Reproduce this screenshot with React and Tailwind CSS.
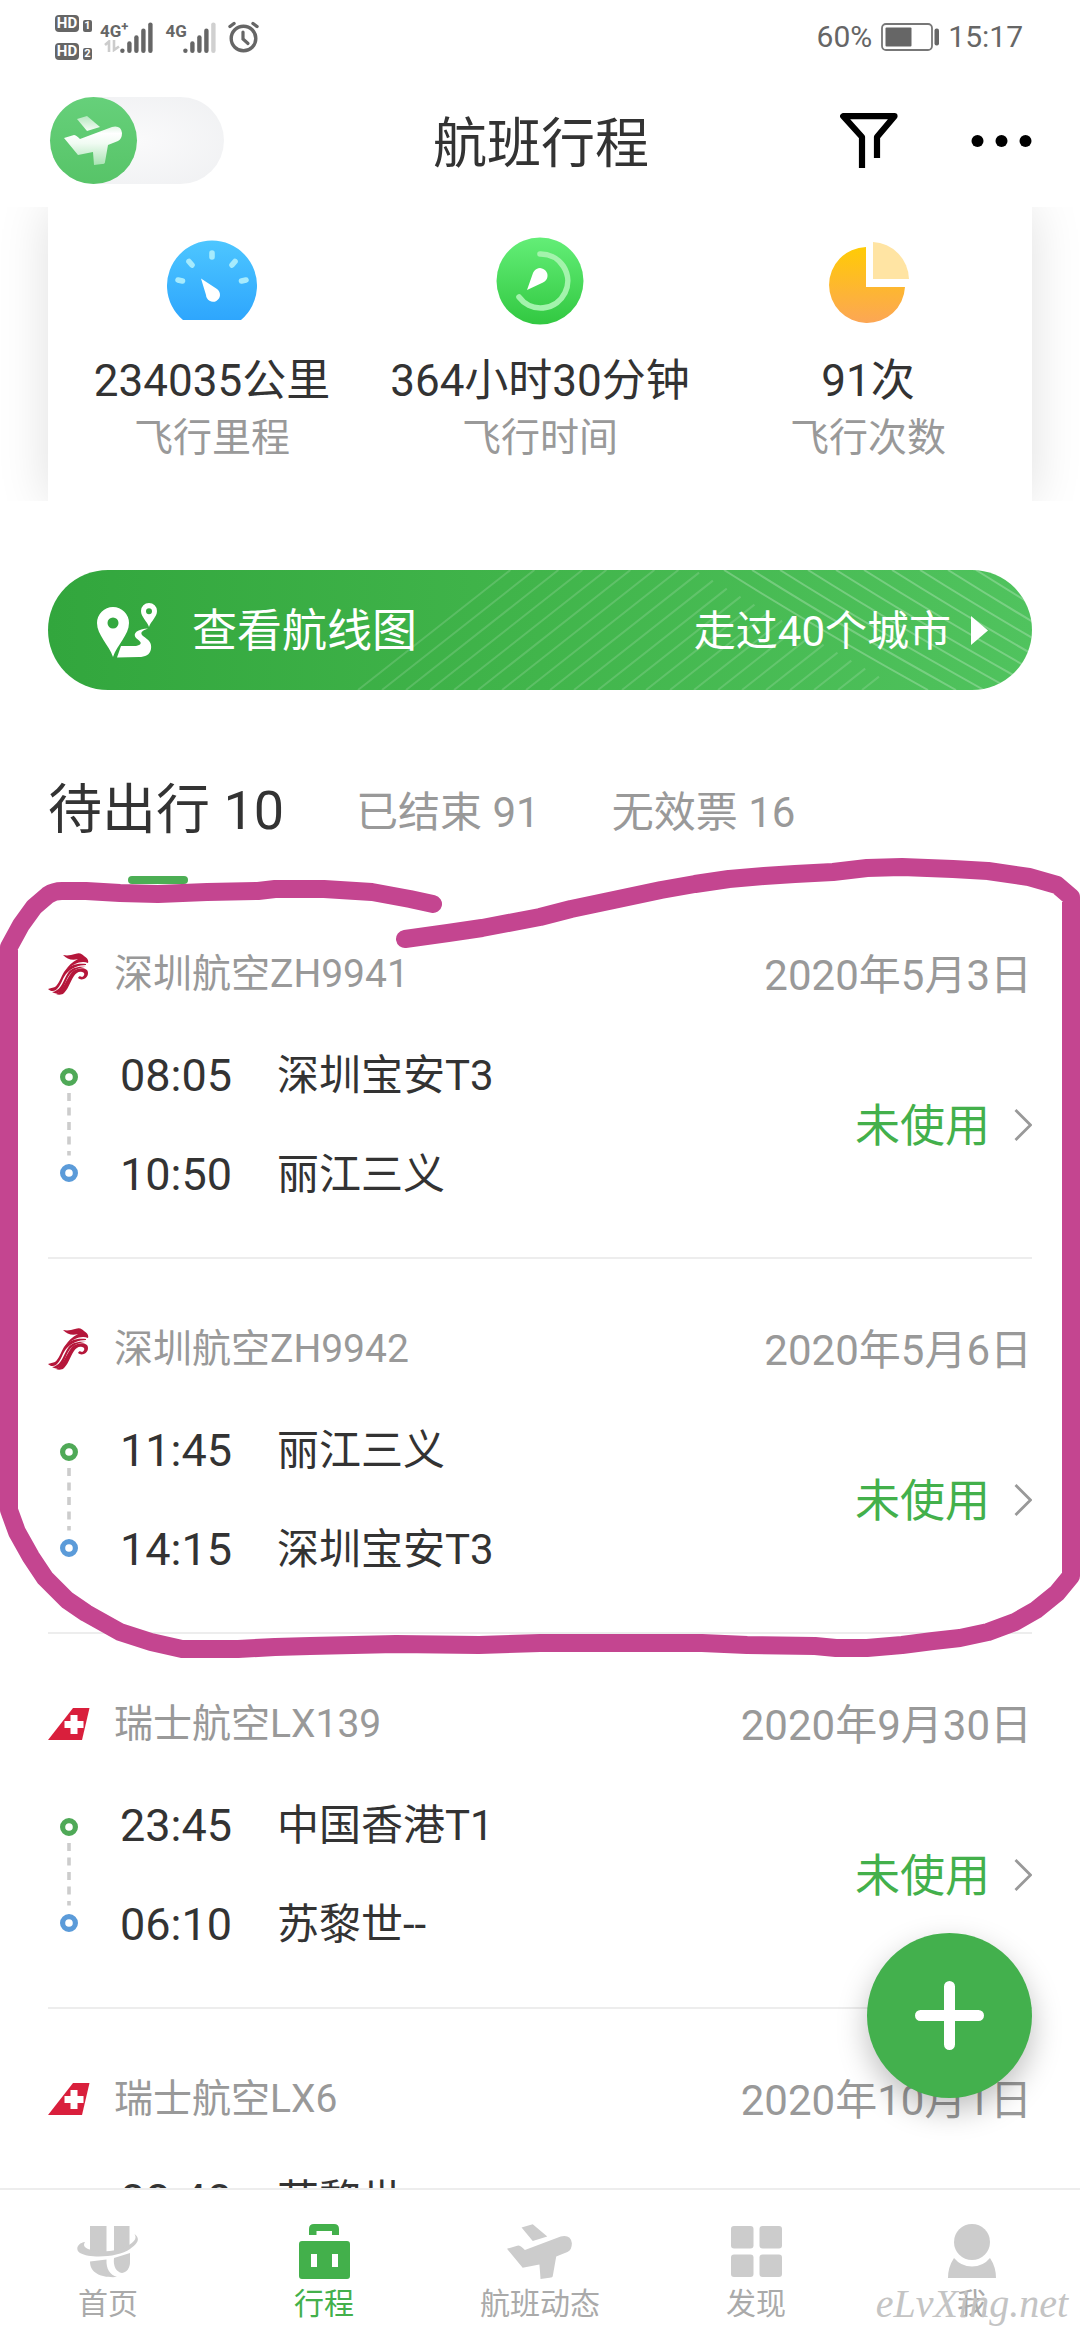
import React, { useState } from 'react';

const flights = [
  { id: 1, airline: '深圳航空', no: 'ZH9941', logo: 'shenzhen', date: '2020年5月3日', depTime: '08:05', dep: '深圳宝安T3', arrTime: '10:50', arr: '丽江三义', status: '未使用' },
  { id: 2, airline: '深圳航空', no: 'ZH9942', logo: 'shenzhen', date: '2020年5月6日', depTime: '11:45', dep: '丽江三义', arrTime: '14:15', arr: '深圳宝安T3', status: '未使用' },
  { id: 3, airline: '瑞士航空', no: 'LX139', logo: 'swiss', date: '2020年9月30日', depTime: '23:45', dep: '中国香港T1', arrTime: '06:10', arr: '苏黎世--', status: '未使用' },
  { id: 4, airline: '瑞士航空', no: 'LX6', logo: 'swiss', date: '2020年10月1日', depTime: '08:40', dep: '苏黎世', arrTime: '', arr: '', status: '' },
];

const tabs = [
  { key: 'upcoming', label: '待出行 10' },
  { key: 'finished', label: '已结束 91' },
  { key: 'invalid', label: '无效票 16' },
];

/* ---------- icons ---------- */

const PlaneShape = () => (
  <>
    <path d="M13 3 L23 0 L36 11 L23 15 Z" />
    <path d="M0 22 L10 19 Q12 19 16 23 L48 11 Q57 9 58 17 Q58 23 54 25 L44 29 L41 46 Q41 48 38 48 L30 49 L29 36 L14 39 Z" />
  </>
);

const HdBadge = ({ sim }) => (
  <span className="flex items-end gap-1">
    <span className="flex h-[17px] w-6 items-center justify-center rounded-sm bg-[#666] text-[15px] font-bold leading-none text-white">HD</span>
    <span className="flex h-3 w-[9px] items-center justify-center rounded-xs bg-[#666] text-[11px] font-bold leading-none text-white">{sim}</span>
  </span>
);

const SignalBars = ({ level }) => (
  <svg className="h-[31px] w-[33px]" viewBox="0 0 33 31" strokeWidth="4.4" strokeLinecap="round">
    {[28.6, 21.5, 15.5, 8.8, 2.6].map((y, i) => (
      <path key={y} d={`M${2.4 + i * 7} ${y} V28.7`} stroke={i < level ? '#666' : '#d0d0d0'} />
    ))}
  </svg>
);

const AlarmIcon = () => (
  <svg className="h-8 w-[31px]" viewBox="0 0 31 32" fill="none" stroke="#666" strokeLinecap="round">
    <circle cx="15.5" cy="17.5" r="12.3" strokeWidth="3.4" />
    <path d="M15 11 V18 L20 22.5" strokeWidth="3.2" />
    <path d="M2 5.5 L6 2.5 M29 5.5 L25 2.5" strokeWidth="3.4" />
  </svg>
);

const BatteryIcon = () => (
  <svg className="h-[28px] w-[58px]" viewBox="0 0 58 28">
    <rect x="1" y="1" width="50" height="26" rx="4" fill="none" stroke="#777" strokeWidth="1.8" />
    <rect x="4.5" y="4.5" width="26" height="19" rx="1" fill="#666" />
    <rect x="53.5" y="5.5" width="4.5" height="17" rx="2" fill="#666" />
  </svg>
);

const FilterIcon = () => (
  <svg className="h-[55px] w-[58px]" viewBox="0 0 58 55" fill="none" stroke="#000" strokeWidth="6.2" strokeLinejoin="round">
    <path d="M22 55 V24 L3.2 3.2 H54.5 L37 24 V45" />
  </svg>
);

const MoreIcon = () => (
  <svg className="h-3 w-[61px]" viewBox="0 0 61 12">
    <circle cx="6.5" cy="6" r="6" />
    <circle cx="30.5" cy="6" r="6" />
    <circle cx="54.5" cy="6" r="6" />
  </svg>
);

const GaugeIcon = () => (
  <svg className="h-[88px] w-[90px]" viewBox="0 -2 90 88">
    <defs>
      <linearGradient id="gauge" x1="0" y1="0" x2="0" y2="1">
        <stop offset="0" stopColor="#4dc6ff" />
        <stop offset="1" stopColor="#2ea6fd" />
      </linearGradient>
    </defs>
    <path d="M16 81 A45 45 0 1 1 74 81 Z" fill="url(#gauge)" />
    <g stroke="#a6ebfd" strokeWidth="5.6" strokeLinecap="round">
      <path d="M45 14 V18 M22 22.500 L25 26 M68 22.500 L65 26 M11 41 L15.500 42 M79 41 L74.500 42" />
    </g>
    <path d="M34 39.500 L50 50 A7 7 0 1 1 39 56 Z" fill="#fff" strokeLinejoin="round" />
  </svg>
);

const CompassIcon = () => (
  <svg className="h-[88px] w-[88px]" viewBox="0 0 88 88">
    <defs>
      <linearGradient id="compass" x1="0" y1="0" x2="0" y2="1">
        <stop offset="0" stopColor="#63ee77" />
        <stop offset="1" stopColor="#32c841" />
      </linearGradient>
    </defs>
    <circle cx="44" cy="44" r="43.5" fill="url(#compass)" />
    <path d="M44 17 A27 27 0 1 1 23 60" fill="none" stroke="#a3f3ac" strokeWidth="5.6" strokeLinecap="round" />
    <path d="M31 53 L37 36 A7.500 7.500 0 1 1 47 45.500 Z" fill="#fff" />
  </svg>
);

const PieIcon = () => (
  <svg className="h-[88px] w-[82px]" viewBox="-2 -1 82 88">
    <defs>
      <linearGradient id="pie" x1="0" y1="0" x2="0" y2="1">
        <stop offset="0" stopColor="#ffcb05" />
        <stop offset="1" stopColor="#fca655" />
      </linearGradient>
    </defs>
    <path d="M37 9 V49 H76 A38 38 0 1 1 37 9 Z" fill="url(#pie)" />
    <path d="M44 4 A38 38 0 0 1 80 41 H44 Z" fill="#ffe4a3" />
  </svg>
);

const RouteIcon = () => (
  <svg className="h-[55px] w-[61px]" viewBox="0 0 61 55" fill="#fff" fillRule="evenodd">
    <path d="M16 54 C12 42 0 32 0 20 A16 16 0 0 1 32 20 C32 32 20 42 16 54 Z M16 14.500 A5.500 5.500 0 1 0 16 25.500 A5.500 5.500 0 1 0 16 14.500 Z" />
    <path d="M52 24 C50 18 44 14 44 8 A8 8 0 0 1 60 8 C60 14 54 18 52 24 Z M52 5.200 A3 3 0 1 0 52 11.200 A3 3 0 1 0 52 5.200 Z" />
    <path d="M20 54.500 L24 43 L39 43 C44 42 45 40 42 37.500 L39 35 C35 30 41 26 51 25.500 C44 28 43 30 46 33 C52 37 55 40 54 46 C53 52 48 54 42 54 Z" />
  </svg>
);

// Fine diagonal lines on the right part of the banner
const BannerLines = () => {
  const rising = [];
  for (let b = 310; b < 830; b += 24) {
    const y = Math.max(0, (8 + 0.578 * (b - 508)) / 1.734);
    rising.push(`M${b} 120 L${b + 1.27 * (120 - y)} ${y}`);
  }
  const falling = [];
  for (let t = 676; t < 1000; t += 28) {
    falling.push(`M${t} 0 Q${t + 92} 58 ${t + 204} 120`);
  }
  return (
    <svg className="absolute inset-0 h-full w-full" viewBox="0 0 984 120" preserveAspectRatio="xMaxYMid slice" fill="none" stroke="#fff" strokeWidth="2">
      <path d={rising.join(' ')} opacity="0.15" />
      <path d={falling.join(' ')} opacity="0.24" />
    </svg>
  );
};

const AirlineLogo = ({ name }) => {
  if (name === 'swiss') {
    return (
      <svg className="h-8 w-[42px]" viewBox="0 0 42 32">
        <path d="M0 32 L25 0 H41.500 L34 32 Z" fill="#d91f3c" />
        <path d="M26 7 V26 M16.500 16.500 H35.500" stroke="#fff" strokeWidth="7" />
      </svg>
    );
  }
  return (
    <svg className="h-[42px] w-[42px]" viewBox="0 0 42 42" fill="#b5163a">
      <path d="M15 2 C20 3 23 2 27 1 C32 -1 34 1 36 3 C39 5 41 7 40 10 C36 8 31 9 27 11 C23 13 20 15 17 18 C20 13 24 9 30 6 C24 8 19 6 15 2 Z" />
      <path d="M38 11 C29 10 21 12 16 19 C13 24 11 31 7 34 C5 35 2 35 0 36 C2 38 5 39 8 37 C13 33 14 26 18 21 C23 15 31 12 38 12 Z" />
      <path d="M38 14 C30 13 23 15 20 20 C16 26 14 34 9 37 C7 38 6 39 4 39 C7 41 10 41 13 38 C17 33 18 26 22 21 C27 16 33 14 38 14 Z" />
      <path d="M24 19 C30 14 40 14 40 20 C40 26 33 28 30 25 C31 23 32 23 34 24 C37 23 37 19 34 19 C31 18 28 20 26 23 C22 29 20 37 15 41 C12 42 10 42 8 41 C15 38 18 26 24 19 Z" />
    </svg>
  );
};

const RouteDots = () => (
  <svg className="h-[114px] w-[42px]" viewBox="0 0 42 114" fill="none">
    <circle cx="21" cy="9" r="6.4" stroke="#4fa957" strokeWidth="5.2" />
    <path d="M21 25 V87.500" stroke="#ccc" strokeWidth="3.6" strokeDasharray="8 6.5" />
    <circle cx="21" cy="105" r="6.4" stroke="#5b9bd9" strokeWidth="5.2" />
  </svg>
);

const ChevronIcon = () => (
  <svg className="h-8 w-[18px]" viewBox="0 0 18 32" fill="none" stroke="#999" strokeWidth="2.8">
    <path d="M1.500 1 L16.500 16 L1.500 31" />
  </svg>
);

const HomeIcon = () => (
  <svg className="h-14 w-[62px]" viewBox="0 -3 62 56" fill="currentColor">
    <path d="M13 0 H29.500 V27 H13 Z M37 0 H52.500 V20 L37 26 Z" />
    <path d="M8 16 C0 17 -2 24 3 27 C14 33 42 31 53 23 C62 17 63 12 57.500 8 C60 12 58 15 52 19 C40 26 22 27 11 23 C7 21 6 19 8 16 Z" />
    <path d="M13 35.500 L29.500 33.500 C29 43 33 49 40 51 C26 52 13 48 13 35.500 Z" />
    <path d="M37 32 L53 27 V36 C53 42 50 46 45 47 C39 46 36 40 37 32 Z" />
  </svg>
);

const TripIcon = () => (
  <svg className="h-14 w-[51px]" viewBox="0 0 51 56" fill="currentColor" fillRule="evenodd">
    <path d="M10 12 V6 Q10 1 15 1 H35 Q40 1 40 6 V12 H33 V8 H17.500 V12 Z" />
    <path d="M3 18 H48 Q51 18 51 21 V53 Q51 56 48 56 H3 Q0 56 0 53 V21 Q0 18 3 18 Z M12 31 V44 H18 V31 Z M33 31 V44 H39 V31 Z" />
  </svg>
);

const StatusIcon = () => (
  <svg className="h-14 w-[66px]" viewBox="0 -1 59 50" fill="currentColor">
    <PlaneShape />
  </svg>
);

const DiscoverIcon = () => (
  <svg className="h-14 w-[51px]" viewBox="0 -3 51 56" fill="currentColor">
    <rect width="22.500" height="22.500" rx="3" />
    <rect x="28.500" width="22.500" height="22.500" rx="3" />
    <rect y="28.500" width="22.500" height="22.500" rx="3" />
    <rect x="28.500" y="28.500" width="22.500" height="22.500" rx="3" />
  </svg>
);

const MeIcon = () => (
  <svg className="h-14 w-12" viewBox="0 -1 48 56" fill="currentColor">
    <circle cx="24" cy="18" r="18" />
    <path d="M6 34 Q13 42.500 24 42.500 Q35 42.500 42 34 Q48 43 48 54 H0 Q0 43 6 34 Z" />
  </svg>
);

const navItems = [
  { label: '首页', icon: HomeIcon },
  { label: '行程', icon: TripIcon, active: true },
  { label: '航班动态', icon: StatusIcon },
  { label: '发现', icon: DiscoverIcon },
  { label: '我', icon: MeIcon },
];

const stats = [
  { value: '234035公里', label: '飞行里程', icon: GaugeIcon },
  { value: '364小时30分钟', label: '飞行时间', icon: CompassIcon },
  { value: '91次', label: '飞行次数', icon: PieIcon },
];

/* ---------- sections ---------- */

const StatusBar = () => (
  <div className="flex h-[74px] shrink-0 items-center justify-between pl-[55px] pr-[57px] text-[#666]">
    <div className="flex items-center">
      <div className="flex flex-col gap-[11px]">
        <HdBadge sim="1" />
        <HdBadge sim="2" />
      </div>
      <div className="ml-2 flex items-start">
        <span className="flex flex-col text-[17px] font-bold leading-[18px]">
          <span className="flex items-start">
            4G<span className="text-[13px] leading-[10px]">+</span>
          </span>
          <svg className="ml-1 h-3 w-4" viewBox="0 0 16 12" fill="none" stroke="#ccc" strokeWidth="2.6">
            <path d="M1 5 L5 1.500 V12 M10 0 V10 L15 6.500" />
          </svg>
        </span>
        <span className="-ml-2"><SignalBars level={5} /></span>
      </div>
      <div className="ml-3 flex items-start">
        <span className="-mr-1 text-[17px] font-bold leading-[18px]">4G</span>
        <SignalBars level={4} />
      </div>
      <span className="ml-3"><AlarmIcon /></span>
    </div>
    <div className="flex items-center gap-[9px] text-[30px] leading-8">
      <span>60%</span>
      <BatteryIcon />
      <span>15:17</span>
    </div>
  </div>
);

const Header = () => (
  <header className="grid h-[133px] shrink-0 grid-cols-3 items-center pl-[50px] pr-12">
    <label className="relative flex h-[87px] w-[174px] cursor-pointer rounded-full bg-radial from-[#fafafb] to-[#eff0f2]">
      <input type="checkbox" className="sr-only" aria-label="飞行模式" />
      <span className="flex size-[87px] items-center justify-center rounded-full bg-linear-to-b from-[#66d07a] to-[#57c468]">
        <svg className="h-[50px] w-[59px]" viewBox="0 0 59 50" fill="url(#plane)">
          <defs>
            <linearGradient id="plane" gradientUnits="userSpaceOnUse" x1="0" y1="0" x2="0" y2="50">
              <stop offset="0" stopColor="#b5e8bf" />
              <stop offset="0.35" stopColor="#fff" />
              <stop offset="0.55" stopColor="#f0fbf2" />
              <stop offset="1" stopColor="#a5e2b0" />
            </linearGradient>
          </defs>
          <PlaneShape />
        </svg>
      </span>
    </label>
    <h1 className="pt-2 text-center text-[54px] leading-[64px] text-[#333]">航班行程</h1>
    <div className="flex items-center justify-end gap-[73px]">
      <button aria-label="筛选"><FilterIcon /></button>
      <button aria-label="更多"><MoreIcon /></button>
    </div>
  </header>
);

const Stats = () => (
  <section className="overflow-hidden px-12">
    <div className="grid grid-cols-3 bg-white pb-[35px] pt-[30px] shadow-[0_0_48px_rgba(0,0,0,0.13)]">
      {stats.map(({ value, label, icon: Icon }) => (
        <div key={label} className="flex flex-col items-center whitespace-nowrap">
          <Icon />
          <span className="mt-[27px] text-[44px] leading-[58px] text-[#333]">{value}</span>
          <span className="text-[39px] leading-[56px] text-[#999]">{label}</span>
        </div>
      ))}
    </div>
  </section>
);

const Banner = () => (
  <a href="#map" className="relative mx-12 mt-[69px] flex h-[120px] items-center overflow-hidden rounded-full bg-linear-to-r from-[#32a63d] via-[#41b54b] to-[#50c35e] pl-[49px] pr-11 text-white">
    <BannerLines />
    <RouteIcon />
    <span className="relative ml-[34px] pt-1 text-[45px] leading-[60px]">查看航线图</span>
    <span className="relative ml-auto pt-1 text-[42px] leading-[60px]">走过40个城市</span>
    <svg className="relative ml-5 h-[29px] w-[17px]" viewBox="0 0 17 29" fill="#fff">
      <path d="M0 0 L17 14.500 L0 29 Z" />
    </svg>
  </a>
);

const FlightRow = ({ flight }) => (
  <li>
    <a href={`#flight-${flight.id}`} className="block border-b-2 border-[#ededed] pb-[33px] pt-[60px]">
      <div className="flex items-start justify-between text-[#999]">
        <div className="flex items-center gap-6">
          <AirlineLogo name={flight.logo} />
          <span className="text-[39px] leading-[60px]">{flight.airline}{flight.no}</span>
        </div>
        <span className="text-[42px] leading-[64px]">{flight.date}</span>
      </div>
      <div className="mt-[18px] flex items-center text-[#333]">
        <RouteDots />
        <div className="ml-[30px] flex-1">
          <div className="flex h-[99px] items-center">
            <span className="w-[157px] text-[45px]">{flight.depTime}</span>
            <span className="text-[42px]">{flight.dep}</span>
          </div>
          <div className="flex h-[99px] items-center">
            <span className="w-[157px] text-[45px]">{flight.arrTime}</span>
            <span className="text-[42px]">{flight.arr}</span>
          </div>
        </div>
        <span className="mr-6 pt-1 text-[45px] text-[#43b04b]">{flight.status}</span>
        <ChevronIcon />
      </div>
    </a>
  </li>
);

// Hand-drawn marker line round the first two flights
const MarkerLine = () => (
  <svg className="pointer-events-none absolute inset-x-0 top-[-34px] h-[820px] w-full" viewBox="0 850 1080 820" preserveAspectRatio="none" fill="none" stroke="#c44590" strokeWidth="18" strokeLinecap="round" strokeLinejoin="round">
    <path d="M433 904 L410 899 L372 892 L324 889 H275 L258 891 L207 892 L158 894 L120 893 L86 891 H62 Q54 891 48 895 L34 907 L21 925 L9 947 V1510 L17 1532 L31 1557 L45 1578 L67 1600 L86 1613 L120 1632 L151 1642 L182 1649 H238 L275 1647 L310 1646 L396 1644 L479 1645 L540 1643 H702 L747 1645 L815 1646 L836 1648 H867 L902 1645 L933 1641 L960 1638 L988 1632 L1015 1622 L1036 1610 L1057 1593 L1071 1576 V897 L1057 885 L1029 877 L988 871 L953 869 L902 867 L867 868 L833 872 L795 874 L764 876 L729 879 L695 884 L661 890 L609 901 L571 909 L540 917 L482 928 L448 933 L405 939" />
  </svg>
);

const BottomNav = () => (
  <nav className="relative grid shrink-0 grid-cols-5 border-t-2 border-[#ededed] bg-white pb-4 pt-[33px]">
    {navItems.map(({ label, icon: Icon, active }) => (
      <a key={label} href="#nav" className={`flex flex-col items-center gap-[5px] ${active ? 'text-[#43b04b]' : 'text-[#ccc]'}`}>
        <Icon />
        <span className={`text-[30px] leading-10 ${active ? 'text-[#43b04b]' : 'text-[#aaa]'}`}>{label}</span>
      </a>
    ))}
    <span className="pointer-events-none absolute bottom-3 right-3 font-['Brush_Script_MT','Liberation_Serif',cursive] text-[40px] italic leading-[48px] text-[#c4c4c4]">eLvXing.net</span>
  </nav>
);

const App = () => {
  const [tab, setTab] = useState('upcoming');

  return (
    <div className="relative flex h-screen flex-col overflow-hidden bg-white font-[Roboto,'Noto_Sans_CJK_SC',sans-serif]">
      <StatusBar />
      <Header />
      <main className="min-h-0 flex-1 overflow-y-auto [scrollbar-width:none]">
        <Stats />
        <Banner />
        <div className="flex gap-[72px] px-12 pt-20">
          {tabs.map((t) => (
            <div key={t.key} className="flex flex-col">
              <button
                onClick={() => setTab(t.key)}
                className={tab === t.key ? 'h-[76px] text-[54px] text-[#333]' : 'h-[84px] text-[42px] text-[#999]'}
              >
                {t.label}
              </button>
              {tab === t.key && <span className="ml-20 mt-[30px] h-2 w-[60px] rounded-full bg-[#4cae54]" />}
            </div>
          ))}
        </div>
        <div className="relative px-12">
          <ul>
            {flights.map((f) => (
              <FlightRow key={f.id} flight={f} />
            ))}
          </ul>
          <MarkerLine />
        </div>
      </main>
      <button aria-label="添加航班" className="absolute bottom-[242px] right-12 flex size-[165px] items-center justify-center rounded-full bg-[#43b04d] shadow-[0_12px_30px_rgba(0,0,0,0.25)]">
        <svg className="size-[69px]" viewBox="0 0 69 69" stroke="#fff" strokeWidth="11" strokeLinecap="round">
          <path d="M34.500 5.500 V63.500 M5.500 34.500 H63.500" />
        </svg>
      </button>
      <BottomNav />
    </div>
  );
};

export default App;
